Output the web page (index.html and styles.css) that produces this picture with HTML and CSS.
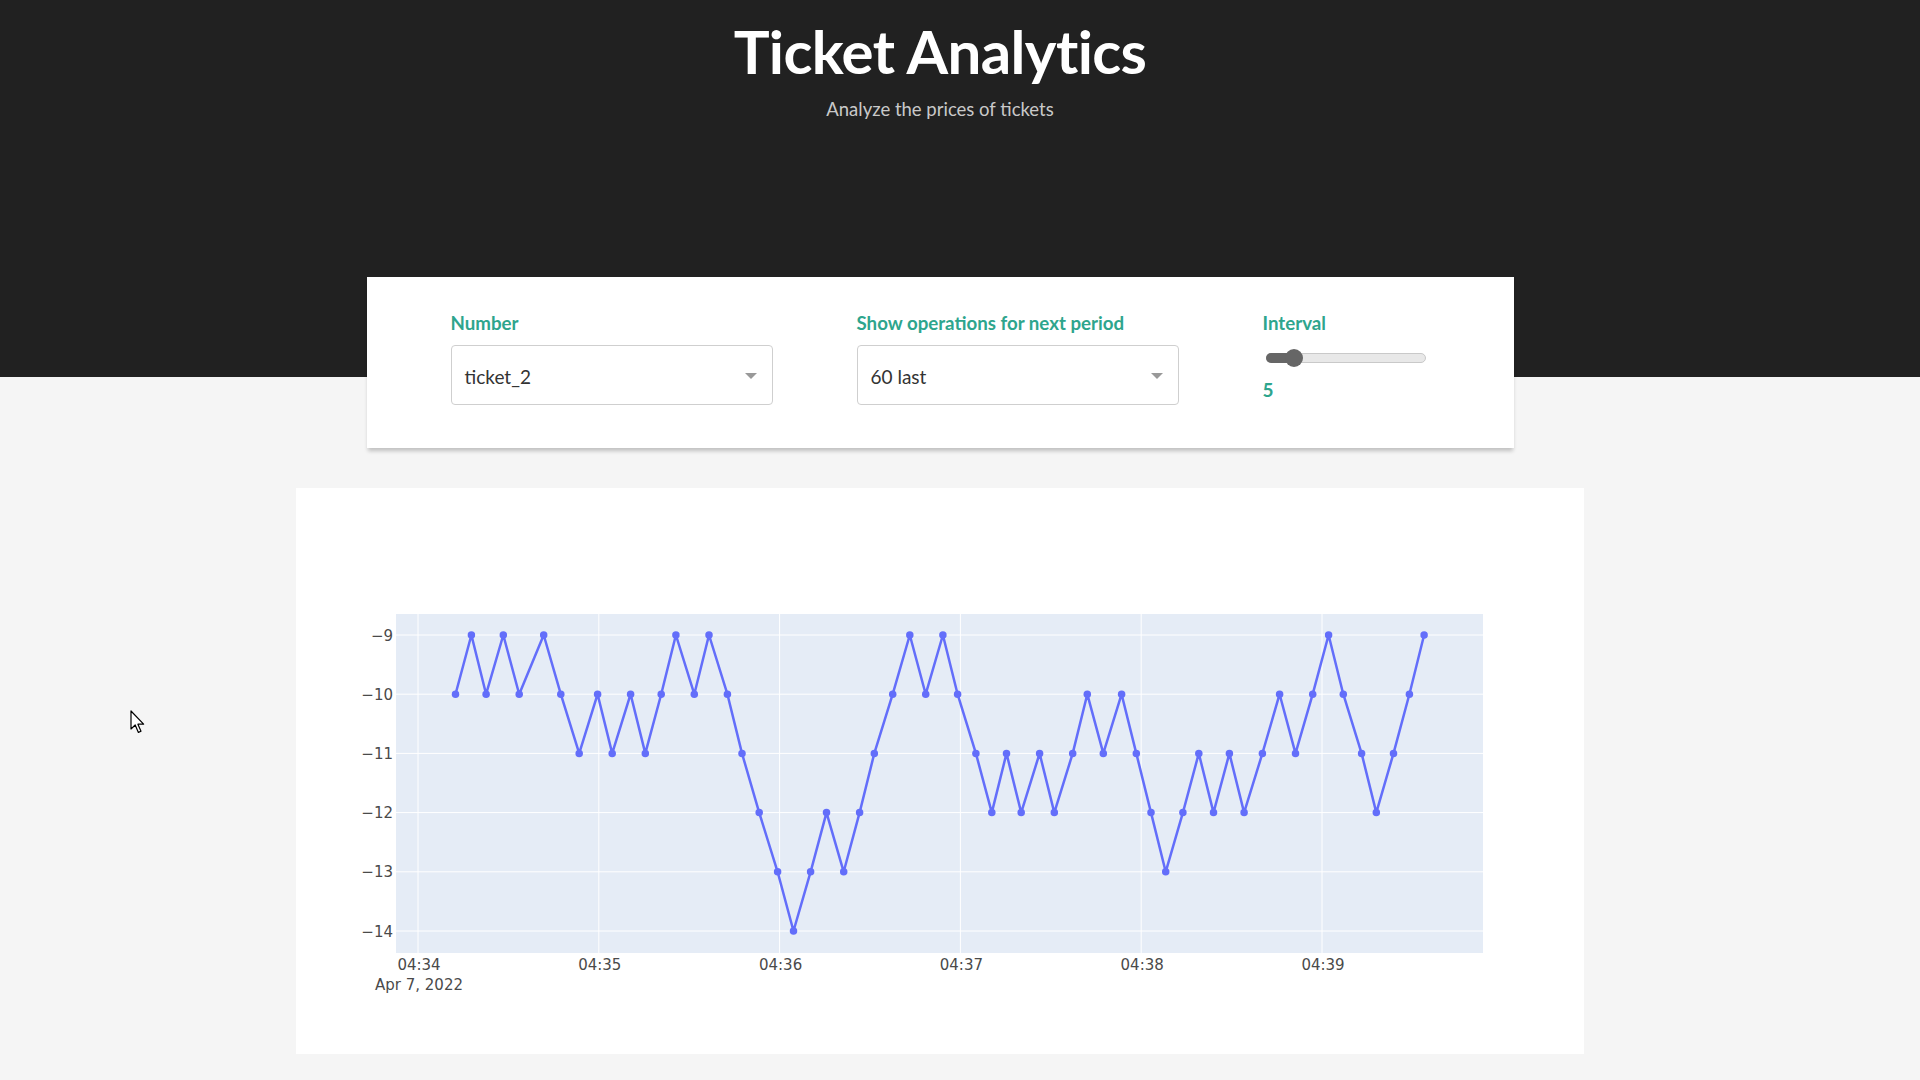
FILE: index.html
```html
<!DOCTYPE html>
<html lang="en">
<head>
<meta charset="utf-8">
<title>Ticket Analytics</title>
<link rel="stylesheet" href="styles.css">
</head>
<body>
<div class="page">
  <header class="hero">
    <h1 class="title">Ticket Analytics</h1>
    <p class="subtitle">Analyze the prices of tickets</p>
  </header>

  <section class="controls">
    <div class="control">
      <div class="label">Number</div>
      <div class="select">
        <span class="select-value">ticket_2</span>
        <span class="select-arrow"></span>
      </div>
    </div>
    <div class="control">
      <div class="label">Show operations for next period</div>
      <div class="select">
        <span class="select-value">60 last</span>
        <span class="select-arrow"></span>
      </div>
    </div>
    <div class="control">
      <div class="label">Interval</div>
      <div class="slider">
        <div class="slider-track">
          <div class="slider-fill" style="width:27px"></div>
          <div class="slider-handle" style="left:27px"></div>
        </div>
      </div>
      <div class="slider-value">5</div>
    </div>
  </section>

  <section class="chart">
    <svg class="chart-svg" width="1288" height="566" viewBox="0 0 1288 566">
      <rect x="100" y="126" width="1087" height="339" fill="#e5ecf6"/>
      <g stroke="#ffffff" stroke-width="1">
        <line x1="122" y1="126" x2="122" y2="465"/>
        <line x1="302.8" y1="126" x2="302.8" y2="465"/>
        <line x1="483.6" y1="126" x2="483.6" y2="465"/>
        <line x1="664.4" y1="126" x2="664.4" y2="465"/>
        <line x1="845.2" y1="126" x2="845.2" y2="465"/>
        <line x1="1026" y1="126" x2="1026" y2="465"/>
        <line x1="100" y1="147" x2="1187" y2="147"/>
        <line x1="100" y1="206.2" x2="1187" y2="206.2"/>
        <line x1="100" y1="265.4" x2="1187" y2="265.4"/>
        <line x1="100" y1="324.6" x2="1187" y2="324.6"/>
        <line x1="100" y1="383.8" x2="1187" y2="383.8"/>
        <line x1="100" y1="443" x2="1187" y2="443"/>
      </g>
      <g class="tick" text-anchor="end">
        <text x="97" y="152.5">−9</text>
        <text x="97" y="211.7">−10</text>
        <text x="97" y="270.9">−11</text>
        <text x="97" y="330.1">−12</text>
        <text x="97" y="389.3">−13</text>
        <text x="97" y="448.5">−14</text>
      </g>
      <g class="tick" text-anchor="middle">
        <text x="123" y="482">04:34</text>
        <text x="123" y="502">Apr 7, 2022</text>
        <text x="303.8" y="482">04:35</text>
        <text x="484.6" y="482">04:36</text>
        <text x="665.4" y="482">04:37</text>
        <text x="846.2" y="482">04:38</text>
        <text x="1027" y="482">04:39</text>
      </g>
      <polyline fill="none" stroke="#636efa" stroke-width="2.5" stroke-linejoin="round"
        points="159.5,206.2 175.4,147 190.1,206.2 207.3,147 223.2,206.2 247.7,147 264.8,206.2 283.2,265.4 301.6,206.2 316.2,265.4 334.6,206.2 349.3,265.4 365.2,206.2 379.9,147 398.3,206.2 413,147 431.4,206.2 446,265.4 463.2,324.6 481.6,383.8 497.5,443 514.6,383.8 530.5,324.6 547.7,383.8 563.6,324.6 578.3,265.4 596.7,206.2 613.8,147 629.7,206.2 646.9,147 661.6,206.2 679.9,265.4 695.8,324.6 710.5,265.4 725.2,324.6 743.6,265.4 758.3,324.6 776.7,265.4 791.3,206.2 807.3,265.4 825.6,206.2 840.3,265.4 855,324.6 869.7,383.8 886.9,324.6 902.8,265.4 917.5,324.6 933.4,265.4 948.1,324.6 966.4,265.4 983.6,206.2 999.5,265.4 1016.7,206.2 1032.6,147 1047.3,206.2 1065.6,265.4 1080.3,324.6 1097.5,265.4 1113.4,206.2 1128.1,147"/>
      <g fill="#636efa">
        <circle cx="159.5" cy="206.2" r="3.75"/><circle cx="175.4" cy="147" r="3.75"/><circle cx="190.1" cy="206.2" r="3.75"/><circle cx="207.3" cy="147" r="3.75"/><circle cx="223.2" cy="206.2" r="3.75"/>
        <circle cx="247.7" cy="147" r="3.75"/><circle cx="264.8" cy="206.2" r="3.75"/><circle cx="283.2" cy="265.4" r="3.75"/><circle cx="301.6" cy="206.2" r="3.75"/><circle cx="316.2" cy="265.4" r="3.75"/>
        <circle cx="334.6" cy="206.2" r="3.75"/><circle cx="349.3" cy="265.4" r="3.75"/><circle cx="365.2" cy="206.2" r="3.75"/><circle cx="379.9" cy="147" r="3.75"/><circle cx="398.3" cy="206.2" r="3.75"/>
        <circle cx="413" cy="147" r="3.75"/><circle cx="431.4" cy="206.2" r="3.75"/><circle cx="446" cy="265.4" r="3.75"/><circle cx="463.2" cy="324.6" r="3.75"/><circle cx="481.6" cy="383.8" r="3.75"/>
        <circle cx="497.5" cy="443" r="3.75"/><circle cx="514.6" cy="383.8" r="3.75"/><circle cx="530.5" cy="324.6" r="3.75"/><circle cx="547.7" cy="383.8" r="3.75"/><circle cx="563.6" cy="324.6" r="3.75"/>
        <circle cx="578.3" cy="265.4" r="3.75"/><circle cx="596.7" cy="206.2" r="3.75"/><circle cx="613.8" cy="147" r="3.75"/><circle cx="629.7" cy="206.2" r="3.75"/><circle cx="646.9" cy="147" r="3.75"/>
        <circle cx="661.6" cy="206.2" r="3.75"/><circle cx="679.9" cy="265.4" r="3.75"/><circle cx="695.8" cy="324.6" r="3.75"/><circle cx="710.5" cy="265.4" r="3.75"/><circle cx="725.2" cy="324.6" r="3.75"/>
        <circle cx="743.6" cy="265.4" r="3.75"/><circle cx="758.3" cy="324.6" r="3.75"/><circle cx="776.7" cy="265.4" r="3.75"/><circle cx="791.3" cy="206.2" r="3.75"/><circle cx="807.3" cy="265.4" r="3.75"/>
        <circle cx="825.6" cy="206.2" r="3.75"/><circle cx="840.3" cy="265.4" r="3.75"/><circle cx="855" cy="324.6" r="3.75"/><circle cx="869.7" cy="383.8" r="3.75"/><circle cx="886.9" cy="324.6" r="3.75"/>
        <circle cx="902.8" cy="265.4" r="3.75"/><circle cx="917.5" cy="324.6" r="3.75"/><circle cx="933.4" cy="265.4" r="3.75"/><circle cx="948.1" cy="324.6" r="3.75"/><circle cx="966.4" cy="265.4" r="3.75"/>
        <circle cx="983.6" cy="206.2" r="3.75"/><circle cx="999.5" cy="265.4" r="3.75"/><circle cx="1016.7" cy="206.2" r="3.75"/><circle cx="1032.6" cy="147" r="3.75"/><circle cx="1047.3" cy="206.2" r="3.75"/>
        <circle cx="1065.6" cy="265.4" r="3.75"/><circle cx="1080.3" cy="324.6" r="3.75"/><circle cx="1097.5" cy="265.4" r="3.75"/><circle cx="1113.4" cy="206.2" r="3.75"/><circle cx="1128.1" cy="147" r="3.75"/>
      </g>
    </svg>
  </section>

  <svg class="cursor" width="16" height="24" viewBox="0 0 16 24">
    <path d="M1 1 L1 19 L5.2 15 L8.4 22.4 L11 21.3 L7.9 14.2 L13.6 14.2 Z" fill="#ffffff" stroke="#000000" stroke-width="1.2" stroke-linejoin="round"/>
  </svg>
</div>
</body>
</html>
```

FILE: styles.css
```css
* { box-sizing: border-box; }

html, body {
  margin: 0;
  padding: 0;
}

body {
  background: #f5f5f5;
  font-family: "Lato", "Liberation Sans", sans-serif;
  overflow: hidden;
}

.page {
  position: relative;
  width: 1920px;
  height: 1080px;
  padding-right: 40px;
  background: linear-gradient(to bottom, #212121 0, #212121 377px, #f5f5f5 377px, #f5f5f5 100%);
}

.hero {
  text-align: center;
  padding-top: 20px;
}

.title {
  margin: 0;
  font-family: "Lato", sans-serif;
  font-weight: 700;
  font-size: 60px;
  line-height: 62px;
  color: #ffffff;
  letter-spacing: -0.6px;
}

.subtitle {
  margin: 16px 0 0;
  font-size: 18.5px;
  line-height: 22px;
  color: #c9c9c9;
}

.controls {
  width: 1147px;
  height: 171px;
  margin: 157px auto 0;
  background: #ffffff;
  box-shadow: 0 4px 4px -1px rgba(0, 0, 0, 0.22);
  padding: 35px 0 0 84px;
  display: grid;
  grid-template-columns: 322px 322px 163px;
  column-gap: 84px;
  align-items: start;
}

.label {
  font-weight: 700;
  font-size: 18.7px;
  line-height: 22px;
  color: #2ea58d;
  white-space: nowrap;
}

.select {
  margin-top: 11px;
  height: 60px;
  border: 1px solid #cfcfcf;
  border-radius: 4px;
  display: flex;
  align-items: center;
  justify-content: space-between;
  padding: 0 15px 0 13px;
}

.select-value {
  font-size: 19px;
  color: #333333;
  padding-top: 2px;
}

.select-arrow {
  width: 0;
  height: 0;
  border-style: solid;
  border-width: 6px 6px 0 6px;
  border-color: #999999 transparent transparent transparent;
  margin-top: 2px;
}

.slider {
  margin-top: 19px;
  padding-left: 3px;
}

.slider-track {
  position: relative;
  width: 160px;
  height: 10px;
  border-radius: 5px;
  background: #e8e8e8;
  border: 1px solid #c9c9c9;
}

.slider-fill {
  border-radius: 5px 0 0 5px;
  background: #666666;
  margin: -1px 0 0 -1px;
  height: 10px;
}

.slider-handle {
  position: absolute;
  top: 50%;
  width: 18px;
  height: 18px;
  margin: -9px 0 0 -9px;
  border-radius: 50%;
  background: #666666;
}

.slider-value {
  margin-top: 16px;
  font-weight: 700;
  font-size: 19px;
  line-height: 22px;
  color: #2ea58d;
  padding-left: 0;
}

.chart {
  width: 1288px;
  height: 566px;
  margin: 40px auto 0;
  background: #ffffff;
}

.chart-svg {
  display: block;
}

.tick text {
  font-family: "DejaVu Sans", Verdana, sans-serif;
  font-size: 15px;
  fill: #4a4a4a;
}

.cursor {
  position: absolute;
  left: 130px;
  top: 710px;
}
```
